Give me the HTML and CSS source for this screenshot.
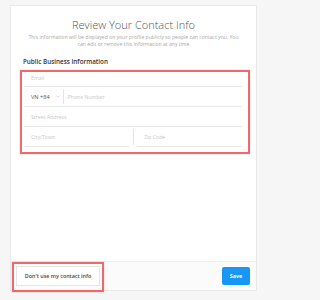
FILE: index.html
```html
<!DOCTYPE html>
<html>
<head>
<meta charset="utf-8">
<link rel="stylesheet" href="styles.css">
</head>
<body>
<div class="card">
  <div class="main">
    <h1 class="title">Review Your Contact Info</h1>
    <p class="desc">This information will be displayed on your profile publicly so people can contact you. You<br>can edit or remove this information at any time</p>
    <h2 class="section">Public Business Information</h2>
    <div class="fields">
      <div class="row row-first"><span class="ph">Email</span></div>
      <div class="row">
        <span class="cc">VN +84</span>
        <svg class="chev" width="4" height="3" viewBox="0 0 4 3"><path d="M0.5 0.8 L2 2.2 L3.5 0.8" fill="none" stroke="#bbb" stroke-width="0.6"/></svg>
        <span class="vsep"></span>
        <span class="ph">Phone Number</span>
      </div>
      <div class="row"><span class="ph">Street Address</span></div>
      <div class="split">
        <div class="row half"><span class="ph">City/Town</span></div>
        <span class="vsep tall"></span>
        <div class="row half"><span class="ph">Zip Code</span></div>
      </div>
    </div>
  </div>
  <div class="footer">
    <div class="mark">
      <button class="btn-secondary">Don't use my contact info</button>
    </div>
    <button class="btn-primary">Save</button>
  </div>
</div>
</body>
</html>
```

FILE: styles.css
```css
html, body {
  margin: 0;
  padding: 0;
  background: #f6f6f6;
  font-family: "Open Sans", "Liberation Sans", sans-serif;
}
body {
  width: 264px;
  height: 300px;
  overflow: hidden;
  padding-top: 5px;
  box-sizing: border-box;
}
.card {
  margin-left: 10px;
  width: 247px;
  height: 286px;
  box-sizing: border-box;
  background: #fff;
  border: 1px solid #e9e9e9;
  display: flex;
  flex-direction: column;
}
.main {
  flex: 1;
  padding-top: 11px;
}
.title {
  margin: 0;
  font-weight: 300;
  font-size: 11px;
  line-height: 15px;
  color: #555;
  text-align: center;
}
.desc {
  margin: 2px 4px 0 4px;
  font-size: 5.1px;
  line-height: 7px;
  color: #a8a8a8;
  text-align: center;
  white-space: nowrap;
}
.section {
  margin: 9px 0 0 12px;
  font-size: 6.3px;
  line-height: 9px;
  font-weight: 600;
  color: #333;
}
.fields {
  margin: 4px 6px 0 9px;
  border: 2px solid #ee6a6a;
  box-shadow: 0 0 1px rgba(238, 80, 80, 0.5);
  padding: 0 6px 5px 2px;
}
.row {
  height: 20px;
  box-sizing: border-box;
  border-bottom: 1px solid #e8e8e8;
  display: flex;
  align-items: center;
  padding-left: 7px;
}
.row-first {
  height: 15px;
  padding-bottom: 2px;
}
.ph {
  font-size: 5.2px;
  color: #c8c8c8;
}
.cc {
  font-size: 5.6px;
  color: #555;
}
.chev {
  margin-left: 6px;
}
.vsep {
  width: 1px;
  height: 15px;
  background: #e4e4e4;
  margin: 0 4px 0 3px;
}
.split {
  display: flex;
  align-items: flex-start;
}
.half {
  flex: 1;
}
.vsep.tall {
  margin: 2px 3px 0 4px;
  height: 16px;
}
.footer {
  height: 28px;
  flex: none;
  background: #fbfbfb;
  border-top: 1px solid #eeeeee;
  display: flex;
  align-items: flex-start;
  justify-content: space-between;
  padding: 0 6px 0 1px;
}
.mark {
  border: 2px solid #ee6a6a;
  box-shadow: 0 0 1px rgba(238, 80, 80, 0.5);
  padding: 2px;
  margin-top: 0;
  margin-bottom: -3px;
  height: 30px;
  box-sizing: border-box;
}
.btn-secondary {
  display: block;
  width: 84px;
  height: 20px;
  border: 1px solid #e6e6e6;
  background: #fff;
  font-family: inherit;
  font-size: 5.4px;
  font-weight: 600;
  color: #444;
  padding: 0;
}
.btn-primary {
  margin-top: 5px;
  width: 28px;
  height: 18px;
  border: none;
  border-radius: 2px;
  background: #1697f5;
  color: #fff;
  font-family: inherit;
  font-size: 5.4px;
  font-weight: 700;
  padding: 0;
}
```
